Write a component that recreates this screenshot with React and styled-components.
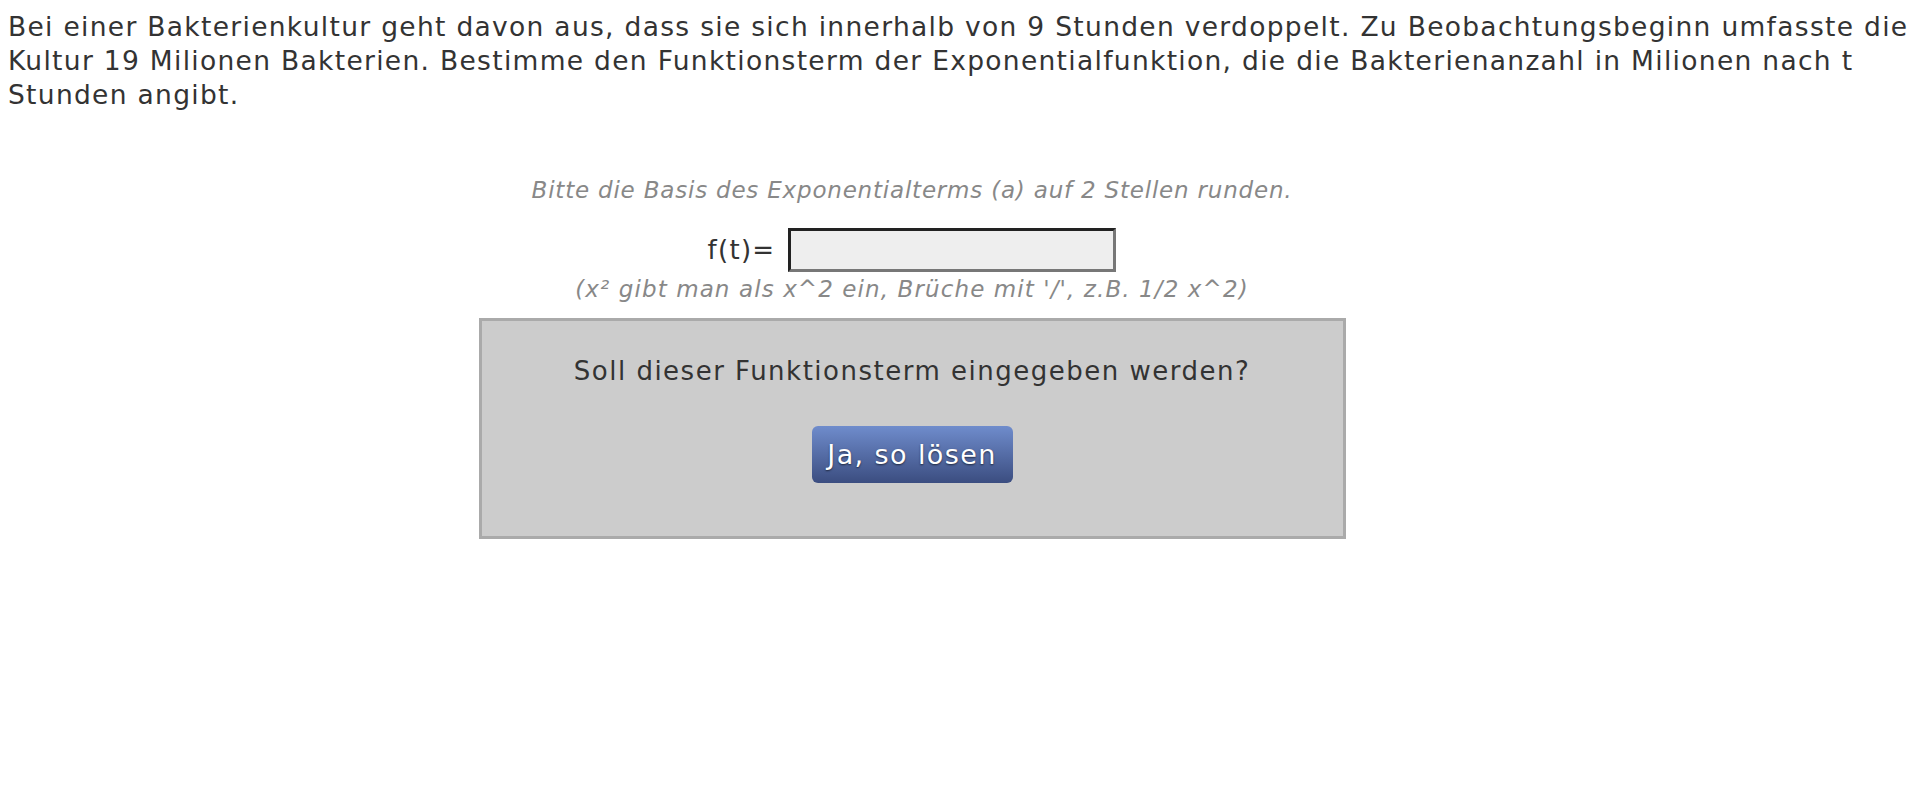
import React from 'react'
import styled, { createGlobalStyle } from 'styled-components'

const GlobalStyle = createGlobalStyle`
  body {
    margin: 8px;
    background: #fff;
    font-family: "DejaVu Sans", Verdana, sans-serif;
    color: #333;
  }
`

const Page = styled.div`
  width: 1904px;
`

const Question = styled.p`
  margin: 2px 0 0;
  font-size: 26.5px;
  letter-spacing: 1.3px;
  line-height: 34px;
`

const Task = styled.div`
  width: 1808px;
  display: flex;
  flex-direction: column;
  align-items: center;
  margin-top: 63px;
`

const Hint = styled.div`
  font-style: italic;
  color: #888;
  font-size: 23px;
  letter-spacing: ${(p) => p.spacing || 1}px;
  line-height: 30px;
  margin-top: ${(p) => p.top || 0}px;
`

const InputRow = styled.div`
  display: flex;
  align-items: center;
  gap: 13px;
  margin-top: 23px;
`

const Label = styled.span`
  font-size: 26px;
  letter-spacing: 1.3px;
`

const TermInput = styled.input`
  width: 328px;
  height: 44px;
  box-sizing: border-box;
  background: #eee;
  border: 3px solid;
  border-color: #222 #777 #777 #222;
  font-size: 22px;
  font-family: inherit;
  padding: 0 6px;
  outline: none;
`

const ConfirmBox = styled.div`
  width: 867px;
  box-sizing: border-box;
  margin-top: 14px;
  background: #ccc;
  border: 3px solid #aaa;
  display: flex;
  flex-direction: column;
  align-items: center;
  padding: 33px 0 53px;
`

const ConfirmText = styled.div`
  font-size: 26px;
  letter-spacing: 1.5px;
  line-height: 34px;
  color: #333;
`

const SolveButton = styled.button`
  margin-top: 38px;
  width: 201px;
  height: 57px;
  border: none;
  border-radius: 6px;
  background: linear-gradient(#6f8ccc, #3b4d80);
  color: #fff;
  font-family: inherit;
  font-size: 27px;
  letter-spacing: 1.4px;
  text-shadow: 0 1px 2px rgba(0, 0, 0, 0.6);
  cursor: pointer;
`

export default function App() {
  return (
    <Page>
      <GlobalStyle />
      <Question>
        Bei einer Bakterienkultur geht davon aus, dass sie sich innerhalb von 9 Stunden verdoppelt. Zu
        Beobachtungsbeginn umfasste die Kultur 19 Milionen Bakterien. Bestimme den Funktionsterm der
        Exponentialfunktion, die die Bakterienanzahl in Milionen nach t Stunden angibt.
      </Question>
      <Task>
        <Hint spacing={0.8}>Bitte die Basis des Exponentialterms (a) auf 2 Stellen runden.</Hint>
        <InputRow>
          <Label>f(t)=</Label>
          <TermInput type="text" />
        </InputRow>
        <Hint spacing={1.1} top={2}>(x² gibt man als x^2 ein, Brüche mit '/', z.B. 1/2 x^2)</Hint>
        <ConfirmBox>
          <ConfirmText>Soll dieser Funktionsterm eingegeben werden?</ConfirmText>
          <SolveButton>Ja, so lösen</SolveButton>
        </ConfirmBox>
      </Task>
    </Page>
  )
}
